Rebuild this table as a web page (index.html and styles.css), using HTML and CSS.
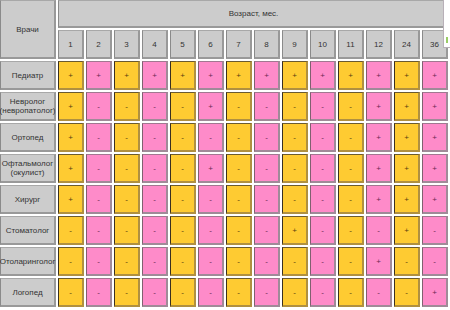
FILE: index.html
```html
<!DOCTYPE html>
<html lang="ru">
<head>
<meta charset="utf-8">
<link rel="stylesheet" href="styles.css">
</head>
<body>
<div class="wrap">
  <div class="grid">
    <div class="cell head corner">Врачи</div>
    <div class="cell head age">Возраст, мес.</div>
    <div class="cell head">1</div><div class="cell head">2</div><div class="cell head">3</div><div class="cell head">4</div><div class="cell head">5</div><div class="cell head">6</div><div class="cell head">7</div><div class="cell head">8</div><div class="cell head">9</div><div class="cell head">10</div><div class="cell head">11</div><div class="cell head">12</div><div class="cell head">24</div><div class="cell head">36</div>

    <div class="cell head">Педиатр</div>
    <div class="cell y">+</div><div class="cell p">+</div><div class="cell y">+</div><div class="cell p">+</div><div class="cell y">+</div><div class="cell p">+</div><div class="cell y">+</div><div class="cell p">+</div><div class="cell y">+</div><div class="cell p">+</div><div class="cell y">+</div><div class="cell p">+</div><div class="cell y">+</div><div class="cell p">+</div>

    <div class="cell head">Невролог<br>(невропатолог)</div>
    <div class="cell y">+</div><div class="cell p">-</div><div class="cell y">-</div><div class="cell p">-</div><div class="cell y">-</div><div class="cell p">+</div><div class="cell y">-</div><div class="cell p">-</div><div class="cell y">-</div><div class="cell p">-</div><div class="cell y">-</div><div class="cell p">+</div><div class="cell y">+</div><div class="cell p">+</div>

    <div class="cell head">Ортопед</div>
    <div class="cell y">+</div><div class="cell p">-</div><div class="cell y">-</div><div class="cell p">-</div><div class="cell y">-</div><div class="cell p">-</div><div class="cell y">-</div><div class="cell p">-</div><div class="cell y">-</div><div class="cell p">-</div><div class="cell y">-</div><div class="cell p">+</div><div class="cell y">+</div><div class="cell p">+</div>

    <div class="cell head">Офтальмолог<br>(окулист)</div>
    <div class="cell y">+</div><div class="cell p">-</div><div class="cell y">-</div><div class="cell p">-</div><div class="cell y">-</div><div class="cell p">+</div><div class="cell y">-</div><div class="cell p">-</div><div class="cell y">-</div><div class="cell p">-</div><div class="cell y">-</div><div class="cell p">+</div><div class="cell y">+</div><div class="cell p">+</div>

    <div class="cell head">Хирург</div>
    <div class="cell y">+</div><div class="cell p">-</div><div class="cell y">-</div><div class="cell p">-</div><div class="cell y">-</div><div class="cell p">-</div><div class="cell y">-</div><div class="cell p">-</div><div class="cell y">-</div><div class="cell p">-</div><div class="cell y">-</div><div class="cell p">+</div><div class="cell y">+</div><div class="cell p">+</div>

    <div class="cell head">Стоматолог</div>
    <div class="cell y">-</div><div class="cell p">-</div><div class="cell y">-</div><div class="cell p">-</div><div class="cell y">-</div><div class="cell p">-</div><div class="cell y">-</div><div class="cell p">-</div><div class="cell y">+</div><div class="cell p">-</div><div class="cell y">-</div><div class="cell p">-</div><div class="cell y">+</div><div class="cell p">-</div>

    <div class="cell head">Отоларинголог</div>
    <div class="cell y">-</div><div class="cell p">-</div><div class="cell y">-</div><div class="cell p">-</div><div class="cell y">-</div><div class="cell p">-</div><div class="cell y">-</div><div class="cell p">-</div><div class="cell y">-</div><div class="cell p">-</div><div class="cell y">-</div><div class="cell p">+</div><div class="cell y">-</div><div class="cell p">-</div>

    <div class="cell head">Логопед</div>
    <div class="cell y">-</div><div class="cell p">-</div><div class="cell y">-</div><div class="cell p">-</div><div class="cell y">-</div><div class="cell p">-</div><div class="cell y">-</div><div class="cell p">-</div><div class="cell y">-</div><div class="cell p">-</div><div class="cell y">-</div><div class="cell p">-</div><div class="cell y">-</div><div class="cell p">+</div>
  </div>
  <div class="overlay"><span class="mark"></span></div>
</div>
</body>
</html>
```

FILE: styles.css
```css
html, body {
  margin: 0;
  padding: 0;
  background: #ffffff;
}

.wrap {
  position: relative;
  width: 450px;
  height: 310px;
  overflow: hidden;
}

.grid {
  display: grid;
  grid-template-columns: 56px repeat(14, 26px);
  grid-template-rows: 28px 29px repeat(8, 29px);
  gap: 2px;
  font-family: "Liberation Sans", Arial, sans-serif;
  font-size: 8px;
  color: #333333;
}

.cell {
  box-sizing: border-box;
  display: flex;
  align-items: center;
  justify-content: center;
  text-align: center;
  line-height: 9px;
  white-space: nowrap;
  border-style: solid;
  border-width: 1px 2px 2px 1px;
}

.head {
  background: #cccccc;
  border-color: #a8a8a8 #999999 #999999 #8a8a8a;
  color: #333333;
}

.corner {
  grid-row: 1 / span 2;
}

.age {
  grid-column: 2 / span 14;
  padding-left: 2px;
}

.y {
  background: #fecb32;
  border-color: #6a5a30 #b09040 #b09040 #3a3020;
  color: #5a4010;
}

.p {
  background: #fe8bc9;
  border-color: #a07890 #a08a98 #a08a98 #806070;
  color: #6a2a50;
}

.overlay {
  position: absolute;
  left: 443px;
  top: -1px;
  width: 10px;
  height: 49px;
  box-sizing: border-box;
  background: #ffffff;
  border-left: 1px solid #b8b0b8;
  border-bottom: 1px solid #b8b0b8;
}

.mark {
  position: absolute;
  left: 2px;
  top: 38px;
  width: 2px;
  height: 6px;
  background: #9acc66;
}
```
